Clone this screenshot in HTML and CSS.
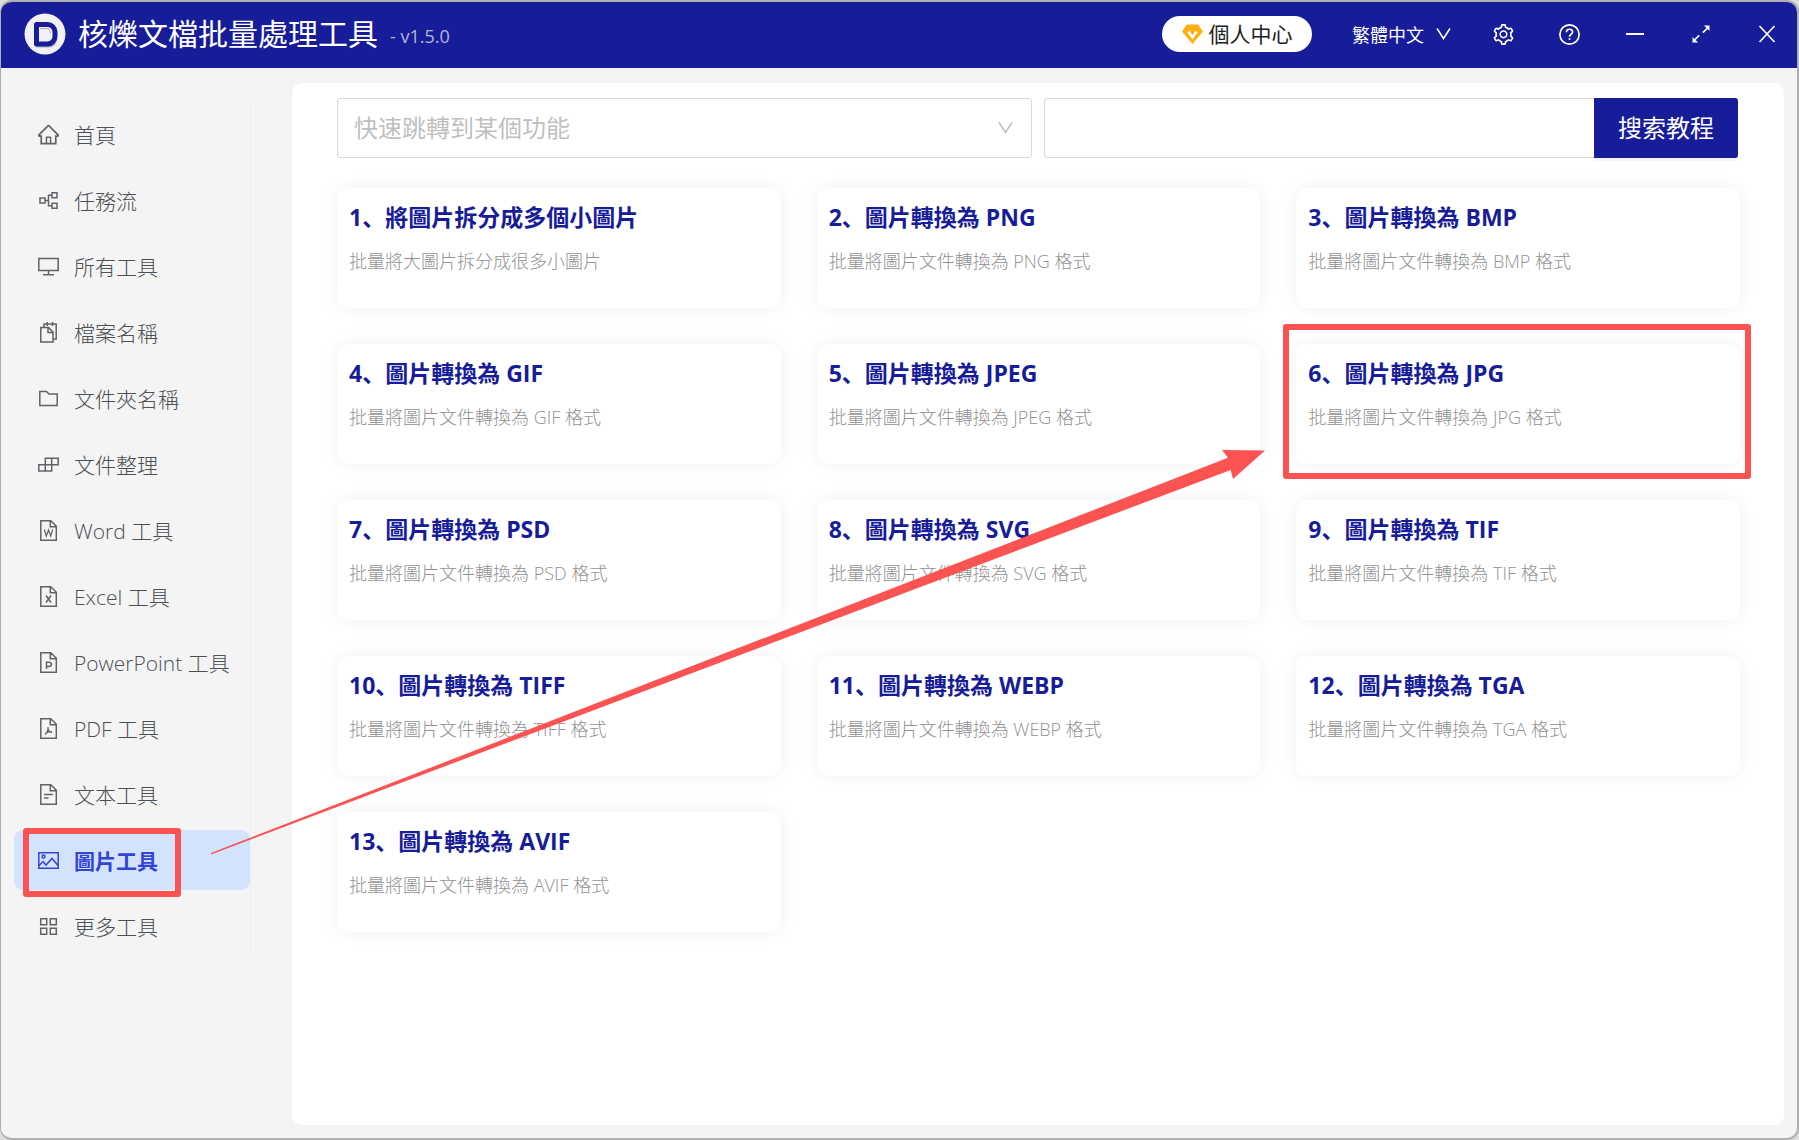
FILE: index.html
```html
<!DOCTYPE html>
<html lang="zh">
<head>
<meta charset="utf-8">
<meta name="viewport" content="width=device-width, initial-scale=1">
<title>核爍文檔批量處理工具</title>
<link rel="stylesheet" href="styles.css">
</head>
<body>
<div class="window">
  <header class="titlebar">
    <svg class="logo" viewBox="0 0 42 42" aria-hidden="true">
      <circle cx="21" cy="21" r="20.5" fill="#f1f1f4"/>
      <path d="M12 12h13c5 0 8 4 8 8.500v5c0 5-3 9-8 9H12z" fill="#aaaab4"/>
      <path d="M12.500 11.500h11a7.500 7.500 0 0 1 7.500 7.500v4.500a7.500 7.500 0 0 1-7.500 7.500h-11z" fill="#f1f1f4" stroke="#171c98" stroke-width="5" stroke-linejoin="round"/>
      <path d="M16 15.500h6a4.500 4.500 0 0 1 4.500 4.500v2.500a4.500 4.500 0 0 1-4.500 4.500h-6z" fill="#f1f1f4"/>
      <path d="M16 15.500h6a4.500 4.500 0 0 1 4.500 4.500" fill="none" stroke="#aaaab4"/>
    </svg>
    <h1 class="app-name">核爍文檔批量處理工具</h1>
    <span class="version">- v1.5.0</span>
    <button class="account" type="button">
      <svg width="21" height="20" viewBox="0 0 21 20" aria-hidden="true"><path d="M5 1h11l4.500 6.500L10.500 19.500.500 7.500z" fill="#ffb011" stroke="#ffb011" stroke-linejoin="round"/><path d="M6.500 7.500l4 6 4-6" fill="none" stroke="#fff" stroke-width="2.500"/></svg>
      個人中心
    </button>
    <button class="language" type="button">繁體中文
      <svg width="15" height="12" viewBox="0 0 15 12" aria-hidden="true"><path d="M1 .500l6.500 10 6.500-10" fill="none" stroke="currentColor" stroke-width="1.500"/></svg>
    </button>
    <div class="controls">
      <button type="button" aria-label="設置"><svg width="21" height="21" viewBox="64 64 896 896" fill="currentColor"><path d="M924.800 625.700l-65.500-56c3.100-19 4.700-38.400 4.700-57.800s-1.600-38.800-4.700-57.800l65.500-56a32.030 32.030 0 009.300-35.200l-.9-2.600a443.740 443.740 0 00-79.700-137.900l-1.800-2.100a32.120 32.120 0 00-35.100-9.500l-81.300 28.900c-30-24.600-63.500-44-99.700-57.600l-15.700-85a32.050 32.050 0 00-25.800-25.700l-2.700-.5c-52.100-9.400-106.900-9.400-159 0l-2.700.5a32.050 32.050 0 00-25.800 25.700l-15.800 85.400a351.860 351.860 0 00-99 57.400l-81.900-29.100a32 32 0 00-35.100 9.500l-1.800 2.100a446.020 446.020 0 00-79.700 137.900l-.9 2.600c-4.500 12.500-.8 26.500 9.300 35.200l66.300 56.600c-3.100 18.800-4.600 38-4.600 57.100 0 19.200 1.500 38.400 4.600 57.100L99 625.500a32.030 32.030 0 00-9.300 35.200l.9 2.600c18.100 50.400 44.900 96.900 79.700 137.900l1.800 2.100a32.120 32.120 0 0035.100 9.500l81.900-29.100c29.800 24.500 63.100 43.900 99 57.400l15.800 85.400a32.050 32.050 0 0025.800 25.700l2.700.5a449.400 449.400 0 00159 0l2.700-.5a32.050 32.050 0 0025.800-25.700l15.700-85a350 350 0 0099.700-57.600l81.300 28.900a32 32 0 0035.100-9.500l1.800-2.100c34.800-41.100 61.600-87.500 79.700-137.900l.9-2.600c4.500-12.300.8-26.300-9.300-35zM788.300 465.900c2.500 15.100 3.800 30.600 3.800 46.100s-1.300 31-3.800 46.100l-6.600 40.100 74.700 63.900a370.030 370.030 0 01-42.600 73.600L721 702.800l-31.400 25.800c-23.900 19.600-50.500 35-79.300 45.800l-38.100 14.300-17.900 97a377.500 377.500 0 01-85 0l-17.900-97.200-37.800-14.500c-28.500-10.800-55-26.200-78.700-45.700l-31.400-25.900-93.400 33.200c-17-22.900-31.200-47.600-42.600-73.600l75.500-64.500-6.500-40c-2.400-14.900-3.700-30.300-3.700-45.500 0-15.300 1.200-30.600 3.700-45.500l6.500-40-75.500-64.500c11.300-26.100 25.600-50.700 42.600-73.600l93.400 33.200 31.400-25.900c23.700-19.500 50.200-34.900 78.700-45.700l37.900-14.300 17.900-97.200c28.100-3.200 56.800-3.200 85 0l17.900 97 38.100 14.300c28.700 10.800 55.400 26.200 79.300 45.800l31.400 25.800 92.800-32.900c17 22.900 31.200 47.600 42.600 73.600L781.800 426l6.500 39.900zM512 326c-97.200 0-176 78.800-176 176s78.800 176 176 176 176-78.800 176-176-78.800-176-176-176zm79.200 255.200A111.600 111.600 0 01512 614c-29.900 0-58-11.700-79.200-32.800A111.600 111.600 0 01400 502c0-29.900 11.700-58 32.800-79.200C454 401.600 482.100 390 512 390c29.900 0 58 11.600 79.200 32.800A111.600 111.600 0 01624 502c0 29.900-11.700 58-32.800 79.200z"/></svg></button>
      <button type="button" aria-label="幫助"><svg width="21" height="21" viewBox="0 0 21 21" fill="none" stroke="currentColor" stroke-width="1.700"><circle cx="10.500" cy="10.500" r="9.600"/><path d="M7.400 8.300c0-4 6.200-4 6.200-.3 0 2.400-3.100 2-3.100 4.700"/><circle cx="10.500" cy="15" r="1" fill="currentColor" stroke="none"/></svg></button>
      <button type="button" aria-label="最小化"><svg width="18" height="18" viewBox="0 0 18 18"><path d="M0 9h18" stroke="currentColor" stroke-width="2"/></svg></button>
      <button type="button" aria-label="最大化"><svg width="18" height="18" viewBox="0 0 18 18"><path d="M12 .500h5.500V6l-1.900-1.900-4.100 4.100-1.200-1.200 4.100-4.100zM6 17.500H.500V12l1.900 1.900 4.100-4.100 1.200 1.200-4.100 4.100z" fill="currentColor"/></svg></button>
      <button type="button" aria-label="關閉"><svg width="18" height="18" viewBox="0 0 18 18"><path d="M1.500 1l15 16M16.500 1l-15 16" stroke="currentColor" stroke-width="1.700"/></svg></button>
    </div>
  </header>

  <div class="body">
    <nav class="sidebar">
      <a class="nav-item" href="#"><svg viewBox="64 64 896 896"><path fill="currentColor" stroke="none" d="M946.500 505L560.100 118.800l-25.900-25.900a31.500 31.500 0 00-44.400 0L77.500 505a63.900 63.900 0 00-18.800 46c.4 35.200 29.700 63.300 64.900 63.300h42.500V940h691.800V614.300h43.400c17.100 0 33.200-6.700 45.300-18.800a63.600 63.600 0 0018.700-45.300c0-17-6.700-33.100-18.800-45.200zM568 868H456V664h112v204zm217.900-325.700V868H632V640c0-22.100-17.900-40-40-40H432c-22.100 0-40 17.900-40 40v228H238.100V542.300h-96l370-369.700 23.100 23.100L882 542.300h-96.100z"/></svg>首頁</a>
      <a class="nav-item" href="#"><svg viewBox="0 0 21 21"><path d="M2 8h5v5H2zM14 2.700h5v5h-5zM14 13.300h5v5h-5zM7 10.500h3.500M14 5.200h-3.500v10.600H14"/></svg>任務流</a>
      <a class="nav-item" href="#"><svg viewBox="0 0 21 21"><path d="M.8 2.500h19.400v12H.8zM10.500 14.500v4M5 18.800h11"/></svg>所有工具</a>
      <a class="nav-item" href="#"><svg viewBox="0 0 21 21"><path d="M2.800 5.500h7.700l4.500 4.500v10H2.800zM10 5.500V10.500h5M6 5V2h12.200v15H15M9.300 0v4M14.500 0v4"/></svg>檔案名稱</a>
      <a class="nav-item" href="#"><svg viewBox="0 0 21 21"><path d="M1.800 3.500h6.700l2.500 2.500h8.200v11.500H1.800z"/></svg>文件夾名稱</a>
      <a class="nav-item" href="#"><svg viewBox="0 0 21 21"><path d="M7.300 4.300h12.900v6.400H7.300zM.8 10.700h12.900v6.300H.8zM13.700 4.300v6.400M7.300 10.700V17"/></svg>文件整理</a>
      <a class="nav-item" href="#"><svg viewBox="0 0 21 21"><path d="M2.800.8h10l5.500 5.500v13.900H2.800zM12.300.8v6h6"/><path stroke-width="1.200" d="M6.300 9.500l2 6.500 2.200-6 2.200 6 2-6.500"/></svg>Word 工具</a>
      <a class="nav-item" href="#"><svg viewBox="0 0 21 21"><path d="M2.800.8h10l5.500 5.500v13.900H2.800zM12.300.8v6h6M8 9.500l5 7M13 9.500l-5 7"/></svg>Excel 工具</a>
      <a class="nav-item" href="#"><svg viewBox="0 0 21 21"><path d="M2.800.8h10l5.500 5.500v13.900H2.800zM12.300.8v6h6M8.500 17v-6.800h2c4 0 4 4.300 0 4.300h-2"/></svg>PowerPoint 工具</a>
      <a class="nav-item" href="#"><svg viewBox="0 0 21 21"><path d="M2.800.8h10l5.500 5.500v13.900H2.800zM12.300.8v6h6"/><path stroke-width="1.200" d="M10 9c.3 4-1 6-3 7.500M10 9.500c0 3 1.500 4.500 4 5.200M7.500 15.300c2-1.500 4.500-2 6.500-1.500"/></svg>PDF 工具</a>
      <a class="nav-item" href="#"><svg viewBox="0 0 21 21"><path d="M2.800.8h10l5.500 5.500v13.900H2.800zM12.300.8v6h6M6 10.500h9M6 14h4.500"/></svg>文本工具</a>
      <a class="nav-item active marked" href="#" aria-current="page"><svg viewBox="0 0 21 21"><path d="M.8 2.700h19.400v15.600H.8zM1 15.500l4-4 3 3.500 6-6.500 6 7"/><circle cx="5.500" cy="6.500" r="1.500"/></svg>圖片工具</a>
      <a class="nav-item" href="#"><svg viewBox="0 0 21 21"><path d="M2.700 2.700h6v6h-6zM12.300 2.700h6v6h-6zM2.700 12.300h6v6h-6zM12.300 12.300h6v6h-6z"/></svg>更多工具</a>
    </nav>

    <main class="panel">
      <div class="search-row">
        <div class="jump">
          <select aria-label="快速跳轉到某個功能"><option>快速跳轉到某個功能</option></select>
          <svg width="15" height="12" viewBox="0 0 15 12" aria-hidden="true"><path d="M1 .500l6.500 10 6.500-10" fill="none" stroke="currentColor" stroke-width="1.500"/></svg>
        </div>
        <form class="search">
          <input type="text" aria-label="搜索教程">
          <button type="button">搜索教程</button>
        </form>
      </div>
      <div class="cards">
        <a class="card" href="#"><h2>1、將圖片拆分成多個小圖片</h2><p>批量將大圖片拆分成很多小圖片</p></a>
        <a class="card" href="#"><h2>2、圖片轉換為 PNG</h2><p>批量將圖片文件轉換為 PNG 格式</p></a>
        <a class="card" href="#"><h2>3、圖片轉換為 BMP</h2><p>批量將圖片文件轉換為 BMP 格式</p></a>
        <a class="card" href="#"><h2>4、圖片轉換為 GIF</h2><p>批量將圖片文件轉換為 GIF 格式</p></a>
        <a class="card" href="#"><h2>5、圖片轉換為 JPEG</h2><p>批量將圖片文件轉換為 JPEG 格式</p></a>
        <a class="card marked" href="#"><h2>6、圖片轉換為 JPG</h2><p>批量將圖片文件轉換為 JPG 格式</p></a>
        <a class="card" href="#"><h2>7、圖片轉換為 PSD</h2><p>批量將圖片文件轉換為 PSD 格式</p></a>
        <a class="card" href="#"><h2>8、圖片轉換為 SVG</h2><p>批量將圖片文件轉換為 SVG 格式</p></a>
        <a class="card" href="#"><h2>9、圖片轉換為 TIF</h2><p>批量將圖片文件轉換為 TIF 格式</p></a>
        <a class="card" href="#"><h2>10、圖片轉換為 TIFF</h2><p>批量將圖片文件轉換為 TIFF 格式</p></a>
        <a class="card" href="#"><h2>11、圖片轉換為 WEBP</h2><p>批量將圖片文件轉換為 WEBP 格式</p></a>
        <a class="card" href="#"><h2>12、圖片轉換為 TGA</h2><p>批量將圖片文件轉換為 TGA 格式</p></a>
        <a class="card" href="#"><h2>13、圖片轉換為 AVIF</h2><p>批量將圖片文件轉換為 AVIF 格式</p></a>
      </div>
    </main>
  </div>
  <svg class="arrow" width="1060" height="410" viewBox="210 448 1060 410" aria-hidden="true"><path d="M211 854.500L1230.700 470l2.300 9L1265 450.500 1222 450l6 7.800L211 853z" fill="#fb5252"/></svg>
</div>
</body>
</html>
```
FILE: styles.css
```css
*, *::after { box-sizing: border-box; }
body {
  margin: 0;
  background: #dcdcdc;
  font-family: "Open Sans", "Noto Sans CJK SC", sans-serif;
  font-size: 18px;
}
a { color: inherit; text-decoration: none; }
button, input, select { font: inherit; }
button { border: 0; padding: 0; background: none; color: inherit; }
h1, h2, p { margin: 0; }

.window {
  position: relative;
  display: flex;
  flex-direction: column;
  min-height: 100vh;
  border: solid #b0b0b0;
  border-width: 2px 2px 2px 1px;
  border-radius: 12px;
  background: #f4f4f4;
  overflow: hidden;
}

.titlebar {
  display: flex;
  align-items: center;
  height: 66px;
  padding: 0 0 2px 23px;
  background: #171c98;
  color: #fff;
}
.logo { width: 42px; height: 42px; }
.app-name { margin-left: 12px; font-size: 30px; line-height: 40px; font-weight: 400; }
.version { margin-left: 12px; padding-top: 4px; color: #b3b5dc; }
.account {
  display: flex;
  align-items: center;
  justify-content: center;
  gap: 6px;
  width: 150px;
  height: 36px;
  margin-left: auto;
  border-radius: 18px;
  background: #fff;
  color: #222;
  font-size: 21px;
  line-height: 36px;
}
.language { display: flex; align-items: center; gap: 12px; margin: 0 22px 0 40px; }
.controls { display: flex; gap: 6px; }
.controls button { display: grid; place-items: center; width: 60px; height: 60px; }

.body { display: flex; flex: 1; padding: 15px 13px 13px; }
.sidebar {
  display: flex;
  flex-direction: column;
  align-self: flex-start;
  flex: none;
  gap: 6px;
  width: 237px;
  margin: 15px 41px 0 0;
  padding: 6px 0 0;
  border-right: 1px solid #eee;
}
.nav-item {
  position: relative;
  display: flex;
  align-items: center;
  gap: 15px;
  height: 60px;
  padding-left: 24px;
  border-radius: 9px;
  color: #4c5055;
  font-size: 21px;
  font-weight: 300;
}
.nav-item svg {
  width: 21px;
  height: 21px;
  fill: none;
  stroke: currentColor;
  stroke-width: 1.5;
  color: #5f6368;
}
.nav-item.active { background: #d3e3fd; color: #3344d4; font-weight: 700; }
.nav-item.active svg { color: inherit; }

.panel {
  flex: 1;
  min-width: 0;
  padding: 15px 44px 45px 45px;
  border-radius: 10px;
  background: #fff;
}
.search-row {
  display: grid;
  grid-template-columns: 1fr 1fr;
  gap: 12px;
  margin: 0 2px 30px 0;
}
.jump { position: relative; }
.jump select {
  display: block;
  width: 100%;
  height: 60px;
  padding: 0 40px 2px 16px;
  border: 1px solid #d9d9d9;
  border-radius: 3px;
  appearance: none;
  background: #fff;
  color: #bfbfbf;
  font-size: 24px;
}
.jump svg { position: absolute; right: 19px; top: 24px; color: #bfbfbf; pointer-events: none; }
.search { display: flex; height: 60px; }
.search input {
  flex: 1;
  min-width: 0;
  padding: 0 16px;
  border: 1px solid #d9d9d9;
  border-right: 0;
  border-radius: 3px 0 0 3px;
  background: #fff;
  font-size: 24px;
}
.search button {
  width: 144px;
  padding-bottom: 3px;
  border-radius: 0 3px 3px 0;
  background: #171c98;
  box-shadow: 0 3px 0 #f4f4f4;
  color: #fff;
  font-size: 24px;
}

.cards { display: grid; grid-template-columns: repeat(3, 1fr); gap: 36px; }
.card {
  position: relative;
  height: 120px;
  padding: 11px 12px;
  border-radius: 12px;
  background: #fff;
  box-shadow: 0 0 18px rgba(0, 0, 0, 0.06);
}
.card h2 { color: #171c98; font-size: 23px; line-height: 36px; font-weight: 700; }
.card p { margin-top: 12px; color: #929292; font-size: 18px; line-height: 28px; font-weight: 300; }

/* Red callouts of the walkthrough */
.marked::after { content: ""; position: absolute; border: 6px solid #fb5252; border-radius: 3px; }
.nav-item.marked::after { left: 9px; top: -2px; width: 158px; height: 69px; }
.card.marked::after { inset: -20px -11px -15px -13px; }
.arrow { position: absolute; left: 209px; top: 446px; pointer-events: none; }
```
